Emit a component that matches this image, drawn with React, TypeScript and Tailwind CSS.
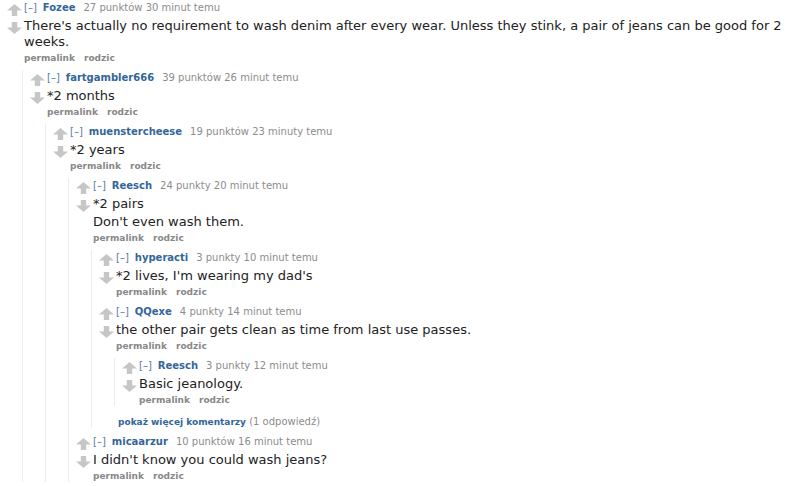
type Comment = {
  author: string;
  points: string;
  time: string;
  body: string[];
  replies?: Comment[];
  more?: string;
};

const thread: Comment = {
  author: "Fozee",
  points: "27 punktów",
  time: "30 minut temu",
  body: ["There's actually no requirement to wash denim after every wear. Unless they stink, a pair of jeans can be good for 2 weeks."],
  replies: [
    {
      author: "fartgambler666",
      points: "39 punktów",
      time: "26 minut temu",
      body: ["*2 months"],
      replies: [
        {
          author: "muenstercheese",
          points: "19 punktów",
          time: "23 minuty temu",
          body: ["*2 years"],
          replies: [
            {
              author: "Reesch",
              points: "24 punkty",
              time: "20 minut temu",
              body: ["*2 pairs", "Don't even wash them."],
              more: "(1 odpowiedź)",
              replies: [
                {
                  author: "hyperacti",
                  points: "3 punkty",
                  time: "10 minut temu",
                  body: ["*2 lives, I'm wearing my dad's"],
                },
                {
                  author: "QQexe",
                  points: "4 punkty",
                  time: "14 minut temu",
                  body: ["the other pair gets clean as time from last use passes."],
                  replies: [
                    {
                      author: "Reesch",
                      points: "3 punkty",
                      time: "12 minut temu",
                      body: ["Basic jeanology."],
                    },
                  ],
                },
              ],
            },
            {
              author: "micaarzur",
              points: "10 punktów",
              time: "16 minut temu",
              body: ["I didn't know you could wash jeans?"],
            },
          ],
        },
      ],
    },
  ],
};

function Arrow({ down }: { down?: boolean }) {
  return (
    <svg width="15" height="12" viewBox="0 0 15 12" className={"block shrink-0 " + (down ? "rotate-180" : "")}>
      <path d="M7.5 0 L15 6.5 L10.2 6.5 L10.2 12 L4.8 12 L4.8 6.5 L0 6.5 Z" fill="#c6c6c6" />
    </svg>
  );
}

function CommentNode({ c }: { c: Comment }) {
  return (
    <div className="pt-[2px]">
      <div className="flex">
        <div className="ml-[7px] w-[15px] shrink-0 flex flex-col pt-[2px] gap-[6px]">
          <Arrow />
          <Arrow down />
        </div>
        <div className="ml-[2px] flex-1 min-w-0">
          <div className="text-[10px] leading-[12px] whitespace-nowrap">
            <span className="text-[#5b77a0]">[–]</span>
            <span className="ml-[6px] font-bold text-[#336699]">{c.author}</span>
            <span className="ml-[8px] text-[#8c8c8c]">
              {c.points} {c.time}
            </span>
          </div>
          <div className="mt-[4px] text-[13px] leading-[16px] text-[#222] flex flex-col gap-[2px]">
            {c.body.map((p, i) => (
              <p key={i}>{p}</p>
            ))}
          </div>
          <div className="mt-[2px] text-[9px] leading-[12px] font-bold text-[#888] flex gap-[9px]">
            <span>permalink</span>
            <span>rodzic</span>
          </div>
        </div>
      </div>
      {c.replies && (
        <div className="mt-[6px] ml-[22px] border-l border-[#ececf2] flex flex-col gap-[6px]">
          {c.replies.map((r, i) => (
            <CommentNode key={i} c={r} />
          ))}
          {c.more && (
            <div className="pt-[4px] pl-[26px] text-[10px] leading-[12px] whitespace-nowrap">
              <span className="font-bold text-[9px] text-[#336699]">pokaż więcej komentarzy</span>{" "}
              <span className="text-[#8c8c8c]">{c.more}</span>
            </div>
          )}
        </div>
      )}
    </div>
  );
}

export default function App() {
  return (
    <div className="h-[486px] w-[800px] overflow-hidden bg-white pr-[14px] font-['DejaVu_Sans',Verdana,sans-serif]">
      <CommentNode c={thread} />
    </div>
  );
}
